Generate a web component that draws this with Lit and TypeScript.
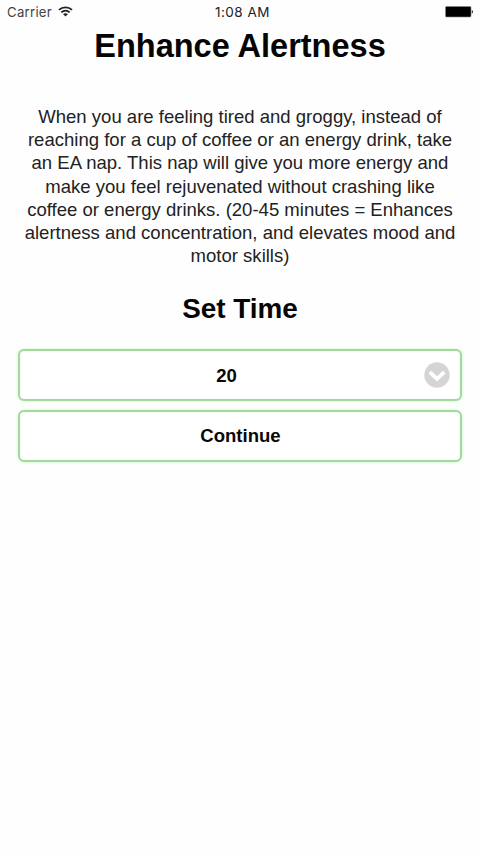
import { LitElement, html, css } from "lit";
import { customElement } from "lit/decorators.js";

const DESCRIPTION = [
  "When you are feeling tired and groggy, instead of",
  "reaching for a cup of coffee or an energy drink, take",
  "an EA nap. This nap will give you more energy and",
  "make you feel rejuvenated without crashing like",
  "coffee or energy drinks. (20-45 minutes = Enhances",
  "alertness and concentration, and elevates mood and",
  "motor skills)",
];

@customElement("app-root")
export class AppRoot extends LitElement {
  static styles = css`
    :host {
      display: flex;
      flex-direction: column;
      box-sizing: border-box;
      width: 100%;
      height: 854px;
      overflow: hidden;
      background: #fefefe;
      color: #050505;
      font-family: "Liberation Sans", Arial, sans-serif;
      text-align: center;
    }
    .status {
      display: grid;
      grid-template-columns: 1fr auto 1fr;
      align-items: center;
      height: 24px;
      padding: 0 6px 0 7px;
      font: 13.2px/24px Inter, sans-serif;
      color: #222;
    }
    .carrier {
      display: flex;
      align-items: center;
      gap: 6px;
      color: #444;
      letter-spacing: 0.25px;
    }
    .carrier svg {
      margin-top: -1px;
    }
    .time {
      font-size: 13.5px;
      letter-spacing: 0.5px;
      margin-left: 4px;
    }
    .battery {
      justify-self: end;
    }
    svg {
      display: block;
    }
    h1 {
      margin: 3px 0 0;
      font-size: 32.5px;
      line-height: 38px;
    }
    p {
      margin: 40px 0 0;
      font-size: 18.55px;
      line-height: 23.2px;
      color: #222;
    }
    .line {
      display: block;
      white-space: nowrap;
    }
    h2 {
      margin: 24.6px 0 0;
      font-size: 27.9px;
      line-height: 34px;
    }
    .actions {
      display: flex;
      flex-direction: column;
      gap: 9px;
      margin: 23px 18px 0;
    }
    button {
      display: grid;
      grid-template-columns: 1fr auto 1fr;
      align-items: center;
      box-sizing: border-box;
      width: 100%;
      height: 52px;
      padding: 0 10px 0 11px;
      border: 2px solid #a3d8a0;
      border-radius: 6px;
      background: #fff;
      color: #080808;
      box-shadow: 0 0 3px #c4fabe, inset 0 0 2px #dcffd8;
      font: bold 18.55px/24px "Liberation Sans", Arial, sans-serif;
    }
    .label {
      grid-column: 2;
    }
    .chevron {
      justify-self: end;
    }
    .select {
      padding: 0 10px 0 9px;
    }
    .select .label {
      margin: 1px 26px 0 0;
    }
  `;

  render() {
    return html`
      <header class="status">
        <span class="carrier">
          Carrier
          <svg width="15" height="11" viewBox="0 0 15 11" fill="none" stroke="#222" stroke-width="1.8">
            <path d="M1 3.9C4.6.4 10.4.4 14 3.9M3.3 6.4c2.4-2.2 6-2.2 8.4 0" />
            <path d="M7.5 10.6 5 8.1c1.4-1.2 3.6-1.2 5 0Z" fill="#222" stroke="none" />
          </svg>
        </span>
        <span class="time">1:08 AM</span>
        <svg class="battery" width="29" height="12" viewBox="0 0 29 12">
          <rect x=".5" y=".5" width="25.5" height="10.5" rx="1" fill="#000" stroke="#888" stroke-width=".6" />
          <path d="M26.8 3.8q2.4 2 0 4Z" fill="#222" />
        </svg>
      </header>
      <h1>Enhance Alertness</h1>
      <p>${DESCRIPTION.map((line) => html`<span class="line">${line}</span>`)}</p>
      <h2>Set Time</h2>
      <div class="actions">
        <button class="select">
          <span class="label">20</span>
          <svg class="chevron" width="26" height="26" viewBox="0 0 26 26">
            <circle cx="13" cy="13" r="12.7" fill="#d5d5d5" />
            <path d="m5.8 10.2 7.2 6.6 7.2-6.6" fill="none" stroke="#fff" stroke-width="3.8" />
          </svg>
        </button>
        <button><span class="label">Continue</span></button>
      </div>
    `;
  }
}
